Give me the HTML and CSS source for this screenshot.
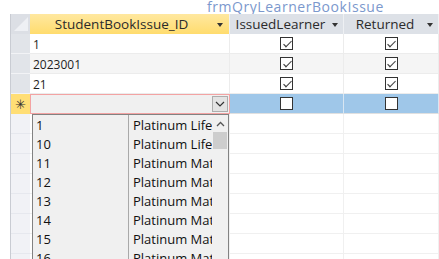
FILE: index.html
```html
<!DOCTYPE html>
<html>
<head>
<meta charset="utf-8">
<link rel="stylesheet" href="styles.css">
</head>
<body>
<div class="page">
  <div class="title">frmQryLearnerBookIssue</div>
  <div class="grid">
    <div class="row head">
      <div class="sel corner"><svg width="19" height="19" viewBox="0 0 19 19"><polygon points="17,3 17,17 3,17" fill="#eef0f4"/></svg></div>
      <div class="hc c1 active"><span>StudentBookIssue_ID</span><i class="arr"></i></div>
      <div class="hc c2"><span>IssuedLearner</span><i class="arr"></i></div>
      <div class="hc c3"><span>Returned</span><i class="arr"></i></div>
    </div>
    <div class="row">
      <div class="sel"></div>
      <div class="cell c1">1</div>
      <div class="cell c2"><span class="cb on"></span></div>
      <div class="cell c3"><span class="cb on"></span></div>
    </div>
    <div class="row alt">
      <div class="sel"></div>
      <div class="cell c1">2023001</div>
      <div class="cell c2"><span class="cb on"></span></div>
      <div class="cell c3"><span class="cb on"></span></div>
    </div>
    <div class="row">
      <div class="sel"></div>
      <div class="cell c1">21</div>
      <div class="cell c2"><span class="cb on"></span></div>
      <div class="cell c3"><span class="cb on"></span></div>
    </div>
    <div class="row newrow">
      <div class="sel star">&#x2733;</div>
      <div class="cell c1 combo"><span class="dd"><svg width="10" height="6" viewBox="0 0 10 6"><polyline points="1,1 5,5 9,1" fill="none" stroke="#333" stroke-width="1.2"/></svg></span></div>
      <div class="cell c2"><span class="cb"></span></div>
      <div class="cell c3"><span class="cb"></span></div>
    </div>
    <div class="row empty"><div class="sel"></div><div class="cell c1"></div><div class="cell c2"></div><div class="cell c3"></div></div>
    <div class="row empty"><div class="sel"></div><div class="cell c1"></div><div class="cell c2"></div><div class="cell c3"></div></div>
    <div class="row empty"><div class="sel"></div><div class="cell c1"></div><div class="cell c2"></div><div class="cell c3"></div></div>
    <div class="row empty"><div class="sel"></div><div class="cell c1"></div><div class="cell c2"></div><div class="cell c3"></div></div>
    <div class="row empty"><div class="sel"></div><div class="cell c1"></div><div class="cell c2"></div><div class="cell c3"></div></div>
    <div class="row empty"><div class="sel"></div><div class="cell c1"></div><div class="cell c2"></div><div class="cell c3"></div></div>
    <div class="row empty"><div class="sel"></div><div class="cell c1"></div><div class="cell c2"></div><div class="cell c3"></div></div>
    <div class="row empty"><div class="sel"></div><div class="cell c1"></div><div class="cell c2"></div><div class="cell c3"></div></div>

    <div class="list">
      <div class="items">
        <div class="li"><span class="a">1</span><span class="b">Platinum Life</span></div>
        <div class="li"><span class="a">10</span><span class="b">Platinum Life</span></div>
        <div class="li"><span class="a">11</span><span class="b">Platinum Mat</span></div>
        <div class="li"><span class="a">12</span><span class="b">Platinum Mat</span></div>
        <div class="li"><span class="a">13</span><span class="b">Platinum Mat</span></div>
        <div class="li"><span class="a">14</span><span class="b">Platinum Mat</span></div>
        <div class="li"><span class="a">15</span><span class="b">Platinum Mat</span></div>
        <div class="li"><span class="a">16</span><span class="b">Platinum Mat</span></div>
      </div>
      <div class="sbar">
        <div class="up"><svg width="9" height="6" viewBox="0 0 9 6"><polyline points="1,5 4.5,1.5 8,5" fill="none" stroke="#555" stroke-width="1.3"/></svg></div>
        <div class="thumb"></div>
      </div>
    </div>
  </div>
</div>
</body>
</html>
```

FILE: styles.css
```css
html, body {
  margin: 0;
  padding: 0;
  background: #ffffff;
  overflow: hidden;
}
.page {
  width: 439px;
  height: 259px;
  overflow: hidden;
  font-family: "Open Sans", "Noto Sans", sans-serif;
  font-size: 12px;
  color: #1e1e1e;
}
.title {
  height: 14px;
  line-height: 14px;
  padding-left: 207px;
  font-size: 14px;
  letter-spacing: 0.55px;
  color: #7b98cd;
  white-space: nowrap;
}
.grid {
  position: relative;
  margin-left: 10px;
  border-left: 1px solid #c9ccd3;
}
.row {
  display: flex;
  height: 20px;
}
.sel {
  width: 19px;
  flex: none;
  background: #e1e4e9;
  border-bottom: 1px solid #f2f3f6;
  box-sizing: border-box;
}
.corner {
  background: #dcdfe5;
  border-bottom: none;
}
.corner svg { display: block; }
.c1 { width: 200px; }
.c2 { width: 114px; }
.c3 { width: 95px; }
.hc, .cell {
  flex: none;
  box-sizing: border-box;
  position: relative;
}
.hc {
  background: #dde1e7;
  border-right: 1px solid #eef0f3;
  display: flex;
  align-items: center;
  justify-content: center;
  font-size: 13.5px;
  color: #2b2b2b;
  padding-right: 12px;
}
.hc.c1 { padding-right: 16px; }
.hc.active {
  background: linear-gradient(#ffe8a0, #ffdc6e);
}
.arr {
  position: absolute;
  right: 5px;
  top: 9px;
  width: 0;
  height: 0;
  border-left: 3.5px solid transparent;
  border-right: 3.5px solid transparent;
  border-top: 4px solid #333;
}
.hc.c1 .arr { right: 6px; }
.cell {
  background: #ffffff;
  border-right: 1px solid #ececec;
  border-bottom: 1px solid #ececec;
  display: flex;
  align-items: center;
  justify-content: center;
}
.cell.c1 {
  justify-content: flex-start;
  padding-left: 3px;
  padding-top: 1px;
}
.alt .cell { background: #f5f5f5; }
.cb {
  width: 13px;
  height: 13px;
  box-sizing: border-box;
  border: 1.5px solid #333;
  background: #fff;
  position: relative;
}
.cb.on::after {
  content: "";
  position: absolute;
  left: 2.5px;
  top: 1px;
  width: 6px;
  height: 3px;
  border-left: 1.3px solid #444;
  border-bottom: 1.3px solid #444;
  transform: translate(0, 2px) rotate(-45deg) scaleX(1.2);
  transform-origin: center;
}
.newrow .sel {
  background: #ffde75;
  display: flex;
  align-items: center;
  justify-content: center;
  font-size: 13px;
  color: #333;
  border-bottom: none;
}
.newrow .cell {
  background: #9fc7e9;
  border-right: 1px solid #d8e6f2;
  border-bottom: 1px solid #e0e0e0;
}
.newrow .combo {
  background: #f0f0f0;
  border: 1px solid #f3a3a3;
  justify-content: flex-end;
  padding: 0 1px 0 0;
}
.dd {
  width: 16px;
  height: 16px;
  box-sizing: border-box;
  background: #e3e3e3;
  border: 1px solid #adadad;
  display: flex;
  align-items: center;
  justify-content: center;
}
.dd svg { display: block; }
.empty .sel { background: #f1f2f6; border-bottom: 1px solid #e6e8ee; }
.empty .cell { border-bottom: 1px solid #f0f0f0; border-right: 1px solid #f0f0f0; }
.list {
  position: absolute;
  left: 21px;
  top: 100px;
  width: 197px;
  height: 160px;
  box-sizing: border-box;
  border: 1px solid #828282;
  background: #f0f0f0;
  display: flex;
}
.items {
  flex: 1;
  background: linear-gradient(to right, transparent 95px, #a9a9a9 95px, #a9a9a9 96px, transparent 96px);
  overflow: hidden;
}
.li {
  display: flex;
  height: 19px;
  align-items: center;
  white-space: nowrap;
  color: #111;
  font-size: 13px;
}
.li .a { width: 96px; padding-left: 3px; box-sizing: border-box; flex: none; }
.li .b { padding-left: 4px; overflow: hidden; }
.sbar {
  width: 16px;
  flex: none;
  background: #f0f0f0;
}
.up {
  height: 17px;
  display: flex;
  align-items: center;
  justify-content: center;
}
.up svg { display: block; }
.thumb {
  height: 17px;
  margin: 0 1px;
  background: #cdcdcd;
}
```
